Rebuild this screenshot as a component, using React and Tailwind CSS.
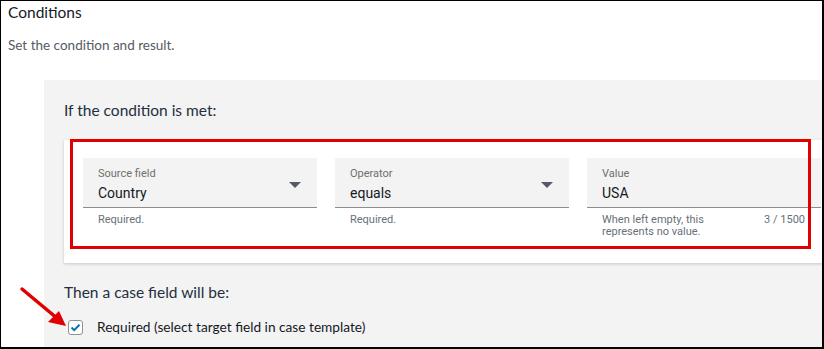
import React from "react";

const heading = { fontFamily: 'Lato, "Open Sans", sans-serif' };
const field = { fontFamily: "Roboto, sans-serif" };

function Caret() {
  return (
    <svg width="12" height="6" viewBox="0 0 12 6" className="shrink-0">
      <path d="M0 0h12L6 6z" fill="#545b64" />
    </svg>
  );
}

function Field({ label, value, help, counter, select }) {
  return (
    <div className="w-[234px] shrink-0" style={field}>
      <div className="flex h-[50px] items-center border-b border-[#8d8d8d] bg-[#f3f3f3] pl-[15px] pr-[16px] pt-[4px]">
        <div className="flex-1">
          <div className="text-[11px] leading-[14px] text-[#6f6f6f]">{label}</div>
          <div className="mt-[3px] text-[14px] leading-[18px] text-[#16191f]">{value}</div>
        </div>
        {select && <Caret />}
      </div>
      <div className="flex justify-between pl-[15px] pr-[16px] pt-[6px] text-[11px] leading-[12px] text-[#687078]">
        <span>{help}</span>
        {counter && <span>{counter}</span>}
      </div>
    </div>
  );
}

export default function App() {
  return (
    <div className="relative h-[349px] w-[824px] overflow-hidden border-b-2 border-l border-r-2 border-t border-black bg-white">
      <div className="pl-[7px]" style={heading}>
        <h1 className="text-[15.5px] leading-[22px] text-[#16191f]">Conditions</h1>
        <p className="mt-[13px] text-[13.5px] leading-[18px] text-[#545b64]">Set the condition and result.</p>
      </div>

      <div className="ml-[43px] mt-[26px] w-[900px] bg-[#f3f3f3] pl-[20px] pt-[20px]">
        <h2 className="text-[15.5px] leading-[20px] text-[#232f3e]" style={heading}>
          If the condition is met:
        </h2>

        <div className="relative mt-[20px] w-[860px] bg-white pb-[25px] pl-[19px] pt-[18px] shadow-[0_1px_3px_rgba(0,0,0,0.18)]">
          <div className="flex gap-[18px]">
            <Field label="Source field" value="Country" help="Required." select />
            <Field label="Operator" value="equals" help="Required." select />
            <Field
              label="Value"
              value="USA"
              help={
                <>
                  When left empty, this
                  <br />
                  represents no value.
                </>
              }
              counter="3 / 1500"
            />
          </div>
          <div className="absolute left-[6px] top-[-1px] h-[110px] w-[741px] border-[3px] border-[#e00000]" />
        </div>

        <h2 className="mt-[19px] text-[15.5px] leading-[20px] text-[#232f3e]" style={heading}>
          Then a case field will be:
        </h2>

        <label className="mt-[16px] flex items-center gap-[14px] pb-[20px] pl-[4px]" style={heading}>
          <span className="flex h-[15px] w-[15px] items-center justify-center rounded-[3px] border border-[#879596] bg-white">
            <svg width="11" height="9" viewBox="0 0 11 9">
              <path d="M1.5 4.5 4.2 7.2 9.5 1.8" fill="none" stroke="#0073bb" strokeWidth="2" />
            </svg>
          </span>
          <span className="text-[13.7px] leading-[18px] text-[#16191f]">
            Required (select target field in case template)
          </span>
        </label>
      </div>

      <svg className="absolute left-[17px] top-[284px]" width="52" height="46" viewBox="0 0 52 46">
        <path d="M4 4 40 34" stroke="#e00000" strokeWidth="3.5" strokeLinecap="round" />
        <path d="M48 41 30 37 41 26z" fill="#e00000" />
      </svg>
    </div>
  );
}
